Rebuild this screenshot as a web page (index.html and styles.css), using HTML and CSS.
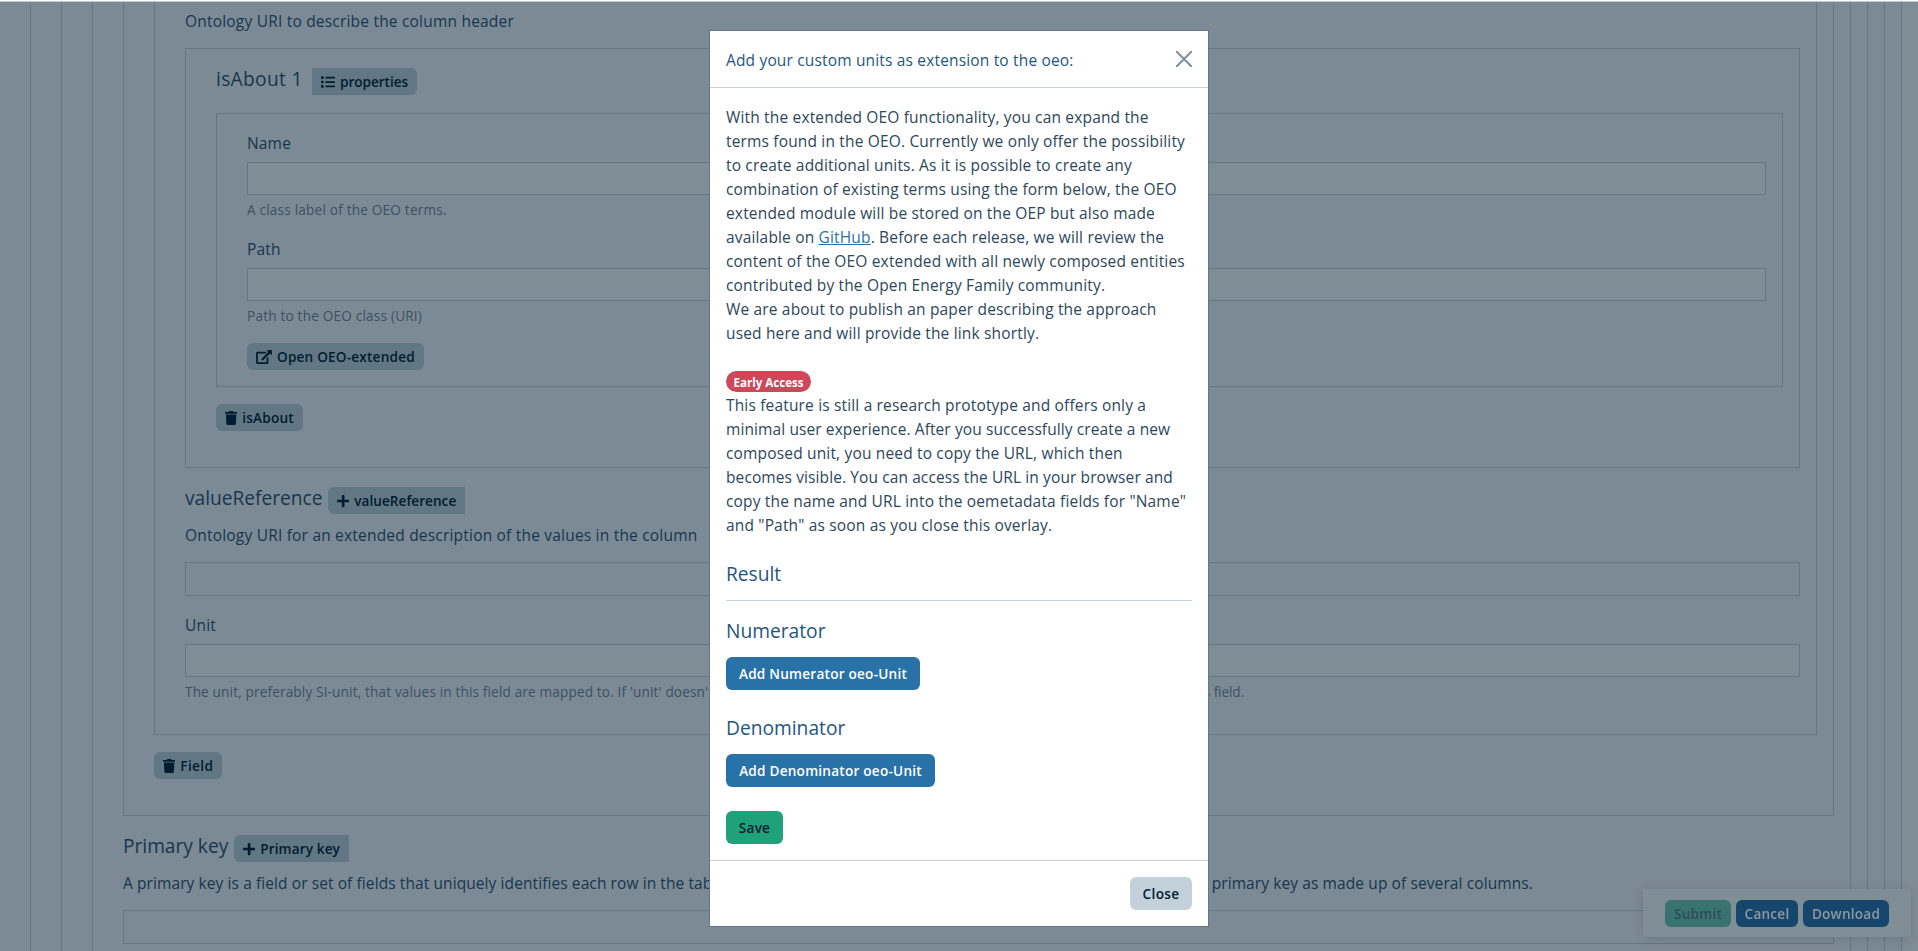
FILE: index.html
```html
<!DOCTYPE html>
<html lang="en">
<head>
<meta charset="utf-8">
<title>Metadata editor</title>
<link rel="stylesheet" href="styles.css">
</head>
<body>
<svg width="0" height="0" class="sprite">
  <symbol id="trash" viewBox="0 0 448 512"><path d="M432 32H312l-9-19a24 24 0 0 0-22-13H167a24 24 0 0 0-21 13l-10 19H16A16 16 0 0 0 0 48v32a16 16 0 0 0 16 16h416a16 16 0 0 0 16-16V48a16 16 0 0 0-16-16zM53 467a48 48 0 0 0 48 45h246a48 48 0 0 0 48-45l21-339H32z"/></symbol>
  <symbol id="plus" viewBox="0 0 448 512"><path d="M416 208H272V64a32 32 0 0 0-32-32h-32a32 32 0 0 0-32 32v144H32a32 32 0 0 0-32 32v32a32 32 0 0 0 32 32h144v144a32 32 0 0 0 32 32h32a32 32 0 0 0 32-32V304h144a32 32 0 0 0 32-32v-32a32 32 0 0 0-32-32z"/></symbol>
  <symbol id="list" viewBox="0 0 512 512"><path d="M80 368H16a16 16 0 0 0-16 16v64a16 16 0 0 0 16 16h64a16 16 0 0 0 16-16v-64a16 16 0 0 0-16-16zm0-320H16A16 16 0 0 0 0 64v64a16 16 0 0 0 16 16h64a16 16 0 0 0 16-16V64a16 16 0 0 0-16-16zm0 160H16a16 16 0 0 0-16 16v64a16 16 0 0 0 16 16h64a16 16 0 0 0 16-16v-64a16 16 0 0 0-16-16zm416 176H176a16 16 0 0 0-16 16v32a16 16 0 0 0 16 16h320a16 16 0 0 0 16-16v-32a16 16 0 0 0-16-16zm0-320H176a16 16 0 0 0-16 16v32a16 16 0 0 0 16 16h320a16 16 0 0 0 16-16V80a16 16 0 0 0-16-16zm0 160H176a16 16 0 0 0-16 16v32a16 16 0 0 0 16 16h320a16 16 0 0 0 16-16v-32a16 16 0 0 0-16-16z"/></symbol>
  <symbol id="external" viewBox="0 0 576 512"><path d="M576 24v128a24 24 0 0 1-41 17l-36-36-243 244a24 24 0 0 1-34 0l-23-23a24 24 0 0 1 0-34L443 77l-36-36a24 24 0 0 1 17-41h128a24 24 0 0 1 24 24zM407 271l-16 16a24 24 0 0 0-7 17v144H64V128h264a24 24 0 0 0 17-7l16-16a24 24 0 0 0-17-41H48a48 48 0 0 0-48 48v352a48 48 0 0 0 48 48h352a48 48 0 0 0 48-48V288a24 24 0 0 0-41-17z"/></symbol>
</svg>
<div class="page">
  <div class="topline"></div>
  <div class="group group-root"><div class="group"><div class="group"><div class="group group-fill">
    <div class="group">
      <div class="group group-value">
        <p class="text">Ontology URI to describe the column header</p>
        <section class="panel">
          <div class="head"><h4 class="title title-isabout">isAbout 1</h4><button class="chip chip-right chip-properties"><svg class="ico ico-list"><use href="#list"/></svg>properties</button></div>
          <section class="panel panel-inner">
            <label class="label">Name</label>
            <div class="field"></div>
            <small class="help">A class label of the OEO terms.</small>
            <label class="label">Path</label>
            <div class="field"></div>
            <small class="help">Path to the OEO class (URI)</small>
            <button class="chip chip-open"><svg class="ico ico-ext"><use href="#external"/></svg>Open OEO-extended</button>
          </section>
          <button class="chip chip-isabout"><svg class="ico ico-trash"><use href="#trash"/></svg>isAbout</button>
        </section>
        <div class="head head-gap"><h4 class="title title-value">valueReference</h4><button class="chip chip-left chip-value"><svg class="ico ico-plus"><use href="#plus"/></svg>valueReference</button></div>
        <p class="text text-below">Ontology URI for an extended description of the values in the column</p>
        <div class="list"></div>
        <label class="label">Unit</label>
        <div class="field"></div>
        <small class="help help-unit"><span>The unit, preferably SI-unit, that values in this field are mapped to. If 'unit' doesn't apply</span><span class="help-end">to this field.</span></small>
      </div>
      <button class="chip chip-field"><svg class="ico ico-trash"><use href="#trash"/></svg>Field</button>
    </div>
    <div class="head head-gap"><h4 class="title title-primary">Primary key</h4><button class="chip chip-left chip-primary"><svg class="ico ico-plus"><use href="#plus"/></svg>Primary key</button></div>
    <p class="text text-below text-primary"><span>A primary key is a field or set of fields that uniquely identifies each row in the table. It is possible to define the</span><span class="primary-end">primary key as made up of several columns.</span></p>
    <div class="list"></div>
  </div></div></div></div>
</div>

<div class="actions">
  <button class="act act-submit">Submit</button>
  <button class="act act-cancel">Cancel</button>
  <button class="act act-download">Download</button>
</div>

<div class="overlay">
  <div class="modal">
    <header class="modal-header"><span>Add your custom units as extension to the oeo:</span>
      <svg class="close" viewBox="0 0 16 16"><path d="M.8.8l14.4 14.4M15.2.8L.8 15.2"/></svg>
    </header>
    <div class="modal-body">
      <p class="copy">With the extended OEO functionality, you can expand the<br>terms found in the OEO. Currently we only offer the possibility<br>to create additional units. As it is possible to create any<br>combination of existing terms using the form below, the OEO<br>extended module will be stored on the OEP but also made<br>available on <a class="link" href="#">GitHub</a>. Before each release, we will review the<br>content of the OEO extended with all newly composed entities<br>contributed by the Open Energy Family community.<br>We are about to publish an paper describing the approach<br>used here and will provide the link shortly.</p>
      <div class="badge-row"><span class="badge">Early Access</span></div>
      <p class="copy">This feature is still a research prototype and offers only a<br><span class="tight">minimal user experience. After you successfully create a new</span><br>composed unit, you need to copy the URL, which then<br><span class="tight">becomes visible. You can access the URL in your browser and</span><br>copy the name and URL into the oemetadata fields for "Name"<br>and "Path" as soon as you close this overlay.</p>
      <h5 class="sub sub-result">Result</h5>
      <hr class="rule">
      <h5 class="sub sub-num">Numerator</h5>
      <button class="btn btn-num">Add Numerator oeo-Unit</button>
      <h5 class="sub sub-den">Denominator</h5>
      <button class="btn btn-den">Add Denominator oeo-Unit</button>
      <button class="btn btn-save">Save</button>
    </div>
    <footer class="modal-footer"><button class="btn btn-close">Close</button></footer>
  </div>
</div>
</body>
</html>
```
FILE: styles.css
```css
* { box-sizing: border-box; }
html { height: 100%; overflow: hidden; }
body {
  margin: 0; height: 951px; overflow: hidden; background: #7f8d95; color: #17364d;
  font: 15.5px/24px "Open Sans", "Noto Sans", sans-serif; letter-spacing: .165px;
}
p, h4, h5 { margin: 0; font-weight: 400; }
button { font: inherit; border: 0; padding: 0; margin: 0; white-space: nowrap; }
.sprite { display: block; position: absolute; }

.page { height: 951px; overflow: hidden; }
.topline { height: 2px; background: #c3cbd0; border-top: 1px solid #fff; }

.group { border: 1px solid #627885; border-top: 0; padding: 0 16px 0 30px; }
.group-root { margin: 0 16px 0 -1px; background: #7c8a95; }
.group-fill { height: 1000px; }
.group .group-fill > .group { padding-bottom: 36px; }
.group .group-value { padding-bottom: 32px; }

.text { padding-top: 7px; white-space: nowrap; letter-spacing: .2px; }
.text-below { padding-top: 9px; }
.text-primary { display: flex; justify-content: space-between; width: 1410px; letter-spacing: .09px; }
.primary-end { letter-spacing: .1px; }
.panel { margin-top: 15px; border: 1px solid #627885; padding: 19px 16px 36px 30px; }
.panel-inner { margin-top: 18px; padding-top: 0; padding-bottom: 16px; }
.head { display: flex; height: 27px; }
.head-gap { margin-top: 19px; }
.title { font-size: 19.2px; line-height: 24px; margin-top: -1px; letter-spacing: -.03px; white-space: nowrap; }
.title-isabout { width: 96px; letter-spacing: .3px; }
.title-value { width: 143px; }
.title-primary { width: 111px; }
.label { display: block; padding-top: 17px; }
.field { height: 33px; margin-top: 7px; border: 1px solid #627885; background: #7f8d95; }
.list { height: 34px; margin-top: 15px; border: 1px solid #627885; }
.help { display: block; margin-top: 4px; font-size: 13.6px; line-height: 21px; letter-spacing: .2px; color: #3c5162; white-space: nowrap; }
.help-unit { display: flex; justify-content: space-between; width: 1059px; letter-spacing: .15px; }
.help-end { letter-spacing: -.1px; }

.chip {
  display: flex; align-items: center; height: 27px; padding-left: 9px; gap: 5px;
  background: #617784; border-radius: 6px; color: #001c30; fill: #001c30;
  font-size: 13.6px; font-weight: 600; line-height: 27px; letter-spacing: .2px;
}
.chip-right { border-radius: 0 6px 6px 0; }
.chip-left { border-radius: 6px 0 0 6px; }
.chip-properties { width: 105px; letter-spacing: -.03px; }
.chip-open { width: 177px; margin-top: 17px; }
.chip-isabout { width: 87px; margin-top: 17px; }
.chip-value { width: 137px; letter-spacing: .03px; }
.chip-field { width: 68px; margin-top: 17px; letter-spacing: .4px; }
.chip-primary { width: 115px; letter-spacing: .12px; }
.ico { height: 14px; flex: none; }
.ico-list { width: 14px; }
.ico-ext { width: 16px; }
.ico-trash, .ico-plus { width: 12.25px; }

.actions {
  position: fixed; right: 7px; bottom: 14px; width: 268px; height: 48px; padding: 11px 22px;
  display: flex; gap: 5px; background: #7f8d95; border-radius: 4px; box-shadow: 0 2px 12px rgba(0, 28, 48, .14);
}
.act { height: 27px; border-radius: 6px; background: #16466c; color: #8d99a1; font-size: 13.6px; font-weight: 600; line-height: 27px; letter-spacing: .22px; text-align: center; }
.act-submit { width: 66px; background: #397370; color: #2b4c5c; }
.act-cancel { width: 62px; }
.act-download { width: 86px; }

.overlay { position: fixed; inset: 0; padding-top: 30px; display: flex; justify-content: center; align-items: flex-start; }
.modal { width: 500px; background: #fff; border: 1px solid #627885; color: #2c475c; }
.modal-header { display: flex; justify-content: space-between; height: 57px; padding: 17px 16px 0 16px; border-bottom: 1px solid #c3d1da; color: #1f5680; }
.close { width: 16px; height: 16px; margin-top: 3px; stroke: #808e99; stroke-width: 2; stroke-linecap: round; fill: none; }
.modal-body { padding: 17px 16px 16px; }
.copy { white-space: nowrap; }
.tight { letter-spacing: .1px; }
.link { color: #2972a7; text-decoration: underline; }
.badge-row { height: 48px; padding-top: 26px; }
.badge { display: block; width: 85px; height: 21px; border-radius: 11px; background: #cf4859; color: #fff; font-size: 11.6px; font-weight: 700; line-height: 23px; letter-spacing: -.02px; text-align: center; }
.sub { font-size: 19.2px; line-height: 24px; letter-spacing: 0; color: #1f5680; }
.sub-result { margin-top: 25px; }
.rule { margin: 14px 0 0; border: 0; height: 1px; background: #c3d1da; }
.sub-num { margin-top: 18px; }
.sub-den { margin-top: 26px; }
.btn { display: block; height: 33px; margin-top: 14px; border-radius: 6px; background: #2972a7; color: #fff; font-size: 13.6px; font-weight: 600; line-height: 33px; letter-spacing: .23px; text-align: center; }
.btn-num { width: 194px; }
.btn-den { width: 209px; }
.btn-save { width: 57px; margin-top: 24px; background: #21a179; color: #001c30; }
.modal-footer { display: flex; justify-content: flex-end; padding: 16px; border-top: 1px solid #c3d1da; }
.btn-close { width: 62px; margin-top: 0; background: #c3d1da; color: #001c30; letter-spacing: .4px; }
```
